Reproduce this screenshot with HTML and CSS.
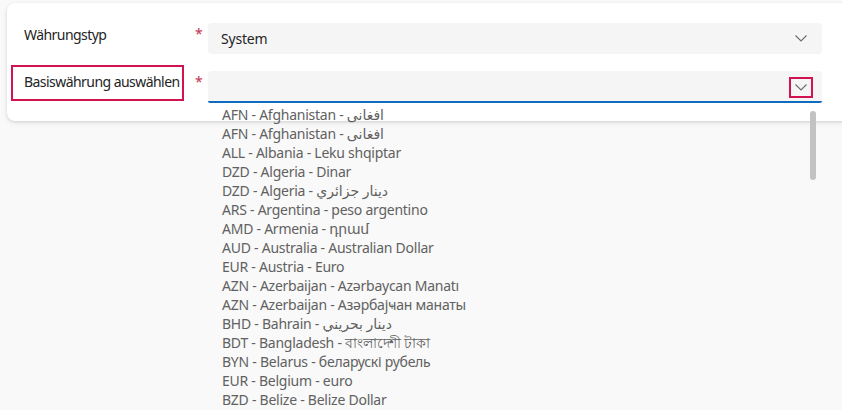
FILE: index.html
```html
<!DOCTYPE html>
<html lang="de">
<head>
<meta charset="utf-8">
<title>Währung</title>
<link rel="stylesheet" href="styles.css">
</head>
<body>
<div class="page">
  <div class="card">
    <div class="row">
      <div class="label">Währungstyp</div>
      <div class="req">*</div>
      <div class="field">
        <span class="value">System</span>
        <span class="chev">
          <svg width="12" height="7" viewBox="0 0 12 7"><polyline points="0.5,0.5 6,6 11.5,0.5" fill="none" stroke="#6b6b6b" stroke-width="1.1"/></svg>
        </span>
      </div>
    </div>
    <div class="row row-2">
      <div class="label">Basiswährung auswählen</div>
      <div class="req">*</div>
      <div class="field field-active">
        <span class="value"></span>
        <span class="chev chev-marked">
          <svg width="12" height="7" viewBox="0 0 12 7"><polyline points="0.5,0.5 6,6 11.5,0.5" fill="none" stroke="#6b6b6b" stroke-width="1.1"/></svg>
        </span>
      </div>
    </div>
    <div class="label-mark"></div>
  </div>
  <div class="listbox">
    <div class="thumb"></div>
    <ul class="options">
      <li>AFN - Afghanistan - افغانی</li>
      <li>AFN - Afghanistan - افغانی</li>
      <li>ALL - Albania - Leku shqiptar</li>
      <li>DZD - Algeria - Dinar</li>
      <li>DZD - Algeria - دينار جزائري</li>
      <li>ARS - Argentina - peso argentino</li>
      <li>AMD - Armenia - դրամ</li>
      <li>AUD - Australia - Australian Dollar</li>
      <li>EUR - Austria - Euro</li>
      <li>AZN - Azerbaijan - Azərbaycan Manatı</li>
      <li>AZN - Azerbaijan - Азәрбајҹан манаты</li>
      <li>BHD - Bahrain - دينار بحريني</li>
      <li>BDT - Bangladesh - বাংলাদেশী টাকা</li>
      <li>BYN - Belarus - беларускі рубель</li>
      <li>EUR - Belgium - euro</li>
      <li>BZD - Belize - Belize Dollar</li>
    </ul>
  </div>
</div>
</body>
</html>
```
FILE: styles.css
```css
html, body {
  margin: 0;
  padding: 0;
  background: #f9f9f9;
  overflow: hidden;
}
body {
  font-family: "Segoe UI", "Noto Sans", "DejaVu Sans", "Noto Sans CJK SC", sans-serif;
  font-size: 14px;
  color: #242424;
}
.page {
  position: relative;
  width: 842px;
  height: 410px;
  overflow: hidden;
}
.card {
  position: relative;
  margin: 3px 0 0 7px;
  width: 860px;
  height: 118px;
  box-sizing: border-box;
  padding: 20px 0 0 17px;
  background: #ffffff;
  border-radius: 8px;
  box-shadow: 0 1px 3px rgba(0,0,0,0.12), 0 2px 6px rgba(0,0,0,0.06);
  display: flex;
  flex-direction: column;
  gap: 17px;
}
.row {
  display: flex;
  align-items: flex-start;
}
.label {
  width: 173px;
  padding-top: 2px;
  line-height: 20px;
  letter-spacing: -0.55px;
  white-space: nowrap;
}
.row-2 .label {
  padding-top: 1px;
}
.req {
  width: 11px;
  margin-left: -2px;
  margin-right: 2px;
  color: #c4314b;
  line-height: 20px;
  padding-top: 1px;
}
.field {
  width: 614px;
  height: 31px;
  box-sizing: border-box;
  background: #f5f5f5;
  border-radius: 4px;
  display: flex;
  align-items: center;
  justify-content: space-between;
  padding: 0 9px 0 13px;
  line-height: 20px;
  letter-spacing: -0.2px;
}
.field-active {
  height: 32px;
  border-bottom: 2px solid #0f6cbd;
  border-radius: 4px 4px 2px 2px;
}
.chev {
  width: 20px;
  height: 18px;
  display: flex;
  align-items: center;
  justify-content: center;
  margin-right: 2px;
}
.chev svg { display: block; }
.chev-marked {
  box-sizing: border-box;
  width: 24px;
  height: 21px;
  border: 2px solid #d3134f;
  margin-right: 0;
  margin-top: 2px;
}
.label-mark {
  position: absolute;
  left: 4px;
  top: 62px;
  width: 173px;
  height: 36px;
  box-sizing: border-box;
  border: 2px solid #d3134f;
}
.listbox {
  position: absolute;
  left: 208px;
  top: 105px;
  width: 614px;
  height: 305px;
}
.thumb {
  position: absolute;
  right: 6px;
  top: 6px;
  width: 6px;
  height: 69px;
  border-radius: 3px;
  background: #c2c2c2;
}
.options {
  list-style: none;
  margin: 0;
  padding: 0 0 0 14px;
  color: #616161;
  line-height: 19px;
  letter-spacing: -0.25px;
}
```
